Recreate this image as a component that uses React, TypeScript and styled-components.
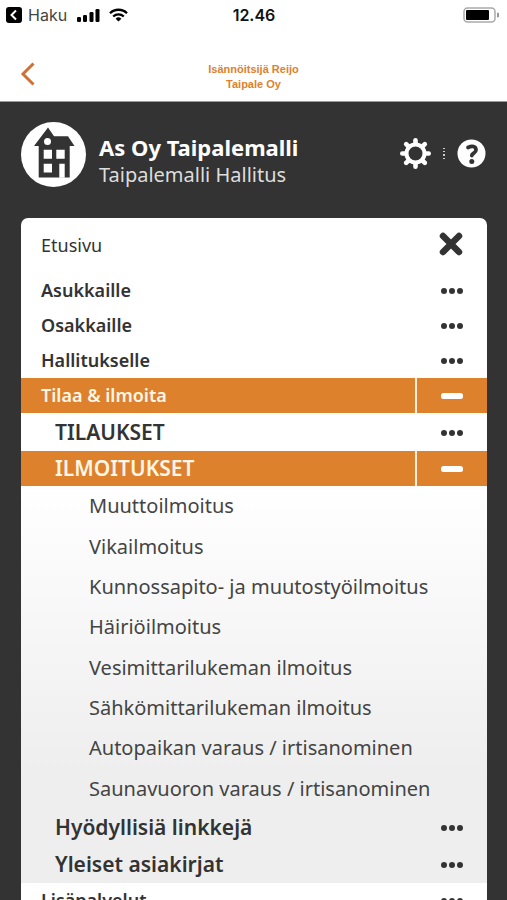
import React from "react";
import styled, { createGlobalStyle, css } from "styled-components";

const ink = "#333333";
const orange = "#dd812d";

const GlobalStyle = createGlobalStyle`
  *, *::before, *::after { box-sizing: border-box; }
  body {
    margin: 0;
    background: ${ink};
    color: ${ink};
    font-family: "Noto Sans", sans-serif;
  }
  button { font: inherit; color: inherit; background: none; border: 0; padding: 0; cursor: pointer; }
  a { color: inherit; text-decoration: none; }
  ul { list-style: none; margin: 0; padding: 0; }
`;

const Screen = styled.div`
  height: 100vh;
  overflow: hidden;
  display: flex;
  flex-direction: column;
`;

const StatusBar = styled.div`
  flex: none;
  display: grid;
  grid-template-columns: 1fr auto 1fr;
  align-items: center;
  height: 29px;
  padding: 0 8px 0 6px;
  background: #fff;
  color: #111;
  font-family: Inter, sans-serif;
`;

const StatusGroup = styled.div<{ $end?: boolean }>`
  display: flex;
  align-items: center;
  justify-content: ${(p) => (p.$end ? "flex-end" : "flex-start")};
`;

const BackToApp = styled.button`
  display: flex;
  align-items: center;
  gap: 6px;
  margin-right: 10px;
  font-size: 16px;
  line-height: 20px;
  color: #444;
`;

const Clock = styled.time`
  padding-left: 3px;
  font-size: 16px;
  font-weight: 600;
  line-height: 20px;
`;

const SignalIcon = styled.svg`
  margin-right: 9px;
`;

const NavBar = styled.header`
  flex: none;
  display: grid;
  grid-template-columns: 72px 1fr 72px;
  align-items: center;
  height: 73px;
  padding-top: 18px;
  background: #fff;
  border-bottom: 1px solid #999;
  color: ${orange};
`;

const BackButton = styled.button`
  display: flex;
  padding-left: 20px;
`;

const NavTitle = styled.h1`
  margin: 0;
  padding-top: 6px;
  text-align: center;
  font-family: "Liberation Sans Narrow", "Liberation Sans", sans-serif;
  font-size: 11px;
  font-weight: 700;
  line-height: 15px;
`;

const Account = styled.section`
  flex: none;
  display: flex;
  align-items: center;
  height: 116px;
  padding: 0 21px;
  color: #fff;
`;

const Avatar = styled.svg`
  flex: none;
  margin: 0 13px 12px 0;
`;

const AccountText = styled.div`
  flex: 1;
  padding-top: 2px;
`;

const AccountName = styled.h2`
  margin: 0;
  font-size: 22px;
  font-weight: 700;
  line-height: 28px;
`;

const AccountRole = styled.p`
  margin: 0;
  font-size: 20px;
  line-height: 28px;
  color: #ddd;
`;

const Tools = styled.div`
  display: flex;
  align-items: center;
  gap: 12px;
  padding-bottom: 14px;
`;

const IconButton = styled.button`
  display: flex;
`;

const Menu = styled.nav`
  flex: none;
  margin: 0 20px 0 21px;
  border-radius: 7px 7px 0 0;
  background: #fff;
  overflow: hidden;
`;

const MenuTop = styled.div`
  display: flex;
  align-items: center;
  justify-content: space-between;
  height: 55px;
  padding: 0 23px 2px 20px;
  font-size: 18px;
  line-height: 24px;
`;

type Level = "main" | "sub";

const Row = styled.div<{ $level: Level; $open?: boolean }>`
  display: flex;
  align-items: stretch;
  height: ${(p) => (p.$level === "main" || p.$open ? 35 : 37)}px;
  font-weight: 600;
  font-size: ${(p) => (p.$level === "main" ? 18 : 21)}px;
  ${(p) =>
    p.$open &&
    css`
      background: ${orange};
      color: #fff6e6;
    `}
`;

const RowLink = styled.a<{ $level: Level }>`
  flex: 1;
  display: flex;
  align-items: center;
  padding: 0 0 2px ${(p) => (p.$level === "main" ? 20 : 34)}px;
`;

const Toggle = styled.button<{ $open?: boolean }>`
  width: 72px;
  display: flex;
  align-items: center;
  justify-content: center;
  border-left: 2px solid ${(p) => (p.$open ? "#fff0dd" : "transparent")};
`;

const SubMenu = styled.div`
  padding-top: 1px;
  background: linear-gradient(#fff 70px, #eeeeee 360px);
`;

const Leaves = styled.ul`
  display: grid;
  grid-auto-rows: 1fr;
  min-height: 323px;
`;

const Leaf = styled.li`
  display: flex;
  align-items: center;
  padding-left: 68px;
  font-size: 20px;
  line-height: 28px;
  color: #444;
`;

function Dots() {
  return (
    <svg width="22" height="8" viewBox="0 0 22 8" fill={ink} aria-hidden="true">
      <circle cx="3" cy="4" r="3" />
      <circle cx="11" cy="4" r="3" />
      <circle cx="19" cy="4" r="3" />
    </svg>
  );
}

function Minus() {
  return (
    <svg width="22" height="6" viewBox="0 0 22 6" fill="#fff" aria-hidden="true">
      <rect width="22" height="6" rx="2.5" />
    </svg>
  );
}

function MenuRow({ label, level = "main", open }: { label: string; level?: Level; open?: boolean }) {
  return (
    <Row $level={level} $open={open}>
      <RowLink href="#" $level={level}>{label}</RowLink>
      <Toggle $open={open} aria-expanded={!!open} aria-label={label}>
        {open ? <Minus /> : <Dots />}
      </Toggle>
    </Row>
  );
}

const forms = [
  "Muuttoilmoitus",
  "Vikailmoitus",
  "Kunnossapito- ja muutostyöilmoitus",
  "Häiriöilmoitus",
  "Vesimittarilukeman ilmoitus",
  "Sähkömittarilukeman ilmoitus",
  "Autopaikan varaus / irtisanominen",
  "Saunavuoron varaus / irtisanominen",
];

const teeth = [0, 45, 90, 135, 180, 225, 270, 315];

export default function App() {
  return (
    <Screen>
      <GlobalStyle />
      <StatusBar>
        <StatusGroup>
          <BackToApp>
            <svg width="16" height="16" viewBox="0 0 16 16" aria-hidden="true">
              <rect width="16" height="16" rx="3" fill="#000" />
              <path d="M10 3.5 5.5 8l4.500 4.500" fill="none" stroke="#fff" strokeWidth="2" />
            </svg>
            Haku
          </BackToApp>
          <SignalIcon width="23" height="14" viewBox="0 0 23 14" fill="#000" aria-hidden="true">
            <rect y="9" width="4" height="5" rx="1.300" />
            <rect x="6" y="7" width="4" height="7" rx="1.300" />
            <rect x="12.500" y="4" width="4" height="10" rx="1.300" />
            <rect x="18.500" y="1" width="4" height="13" rx="1.300" />
          </SignalIcon>
          <svg width="19" height="14" viewBox="0 0 19 14" fill="none" stroke="#000" strokeWidth="2.300" aria-hidden="true">
            <path d="M1 5.200a12.200 12.200 0 0 1 17 0" />
            <path d="M4.200 8.500a7.600 7.600 0 0 1 10.600 0" />
            <path d="M9.500 13.600 6.600 10.700a4.200 4.200 0 0 1 5.800 0Z" fill="#000" stroke="none" />
          </svg>
        </StatusGroup>
        <Clock>12.46</Clock>
        <StatusGroup $end>
          <svg width="36" height="16" viewBox="0 0 36 16" aria-hidden="true">
            <rect x="1" y="1" width="31" height="14" rx="3.500" fill="#fff" stroke="#aaa" strokeWidth="1.500" />
            <rect x="3" y="3" width="23" height="10" rx="1" fill="#000" />
            <path d="M34 5.500a2.500 2.500 0 0 1 0 5Z" fill="#999" />
          </svg>
        </StatusGroup>
      </StatusBar>

      <NavBar>
        <BackButton aria-label="Takaisin">
          <svg width="16" height="24" viewBox="0 0 16 24" fill="none" stroke="#cf7136" strokeWidth="3" aria-hidden="true">
            <path d="M13.500 1.500 3 12l10.500 10.500" />
          </svg>
        </BackButton>
        <NavTitle>
          Isännöitsijä Reijo
          <br />
          Taipale Oy
        </NavTitle>
      </NavBar>

      <Account>
        <Avatar width="65" height="65" viewBox="0 0 65 65" aria-hidden="true">
          <circle cx="32.500" cy="32.500" r="32.500" fill="#fff" />
          <path d="M13 24 27 5.500 33 14.300h14l6.500 9.700h-4.800v31.500h-31V24Z" fill={ink} />
          <circle cx="26.500" cy="19.500" r="3.500" fill="#fff" />
          <path d="M22.700 27.700H31v9h-8.300zM35.300 27.700h8.400v9h-8.400zM22.700 41.700H31v8.800h-8.300zM38.300 41.700h5.400v14h-5.400z" fill="#fff" />
        </Avatar>
        <AccountText>
          <AccountName>As Oy Taipalemalli</AccountName>
          <AccountRole>Taipalemalli Hallitus</AccountRole>
        </AccountText>
        <Tools>
          <IconButton aria-label="Asetukset">
            <svg width="31" height="31" viewBox="-15.500 -15.500 31 31" aria-hidden="true">
              {teeth.map((a) => (
                <path key={a} d="M0-10V-13.200" transform={`rotate(${a})`} stroke="#fff" strokeWidth="4.600" strokeLinecap="round" />
              ))}
              <circle r="9" fill="none" stroke="#fff" strokeWidth="4" />
            </svg>
          </IconButton>
          <svg width="2" height="11" viewBox="0 0 2 11" fill="#ccc" aria-hidden="true">
            <path d="M0 0h2v1H0zM0 3h2v1H0zM0 6h2v2H0zM0 10h2v1H0z" />
          </svg>
          <IconButton aria-label="Ohje">
            <svg width="29" height="29" viewBox="0 0 29 29" aria-hidden="true">
              <circle cx="14.500" cy="14.500" r="14" fill="#fff" />
              <path d="M11 8.500c4-2 8-1.500 8 2.500 0 3-4 3-4.200 5.500" fill="none" stroke={ink} strokeWidth="3.800" strokeLinecap="round" />
              <circle cx="14.800" cy="22.500" r="2.500" fill={ink} />
            </svg>
          </IconButton>
        </Tools>
      </Account>

      <Menu>
        <MenuTop>
          <a href="#">Etusivu</a>
          <IconButton aria-label="Sulje">
            <svg width="26" height="26" viewBox="0 0 26 26" stroke={ink} strokeWidth="6.500" strokeLinecap="round" aria-hidden="true">
              <path d="m5 4 16 16M21 4 5 20" />
            </svg>
          </IconButton>
        </MenuTop>
        <MenuRow label="Asukkaille" />
        <MenuRow label="Osakkaille" />
        <MenuRow label="Hallitukselle" />
        <MenuRow label="Tilaa & ilmoita" open />
        <SubMenu>
          <MenuRow label="TILAUKSET" level="sub" />
          <MenuRow label="ILMOITUKSET" level="sub" open />
          <Leaves>
            {forms.map((f) => (
              <Leaf key={f}>
                <a href="#">{f}</a>
              </Leaf>
            ))}
          </Leaves>
          <MenuRow label="Hyödyllisiä linkkejä" level="sub" />
          <MenuRow label="Yleiset asiakirjat" level="sub" />
        </SubMenu>
        <MenuRow label="Lisäpalvelut" />
      </Menu>
    </Screen>
  );
}
